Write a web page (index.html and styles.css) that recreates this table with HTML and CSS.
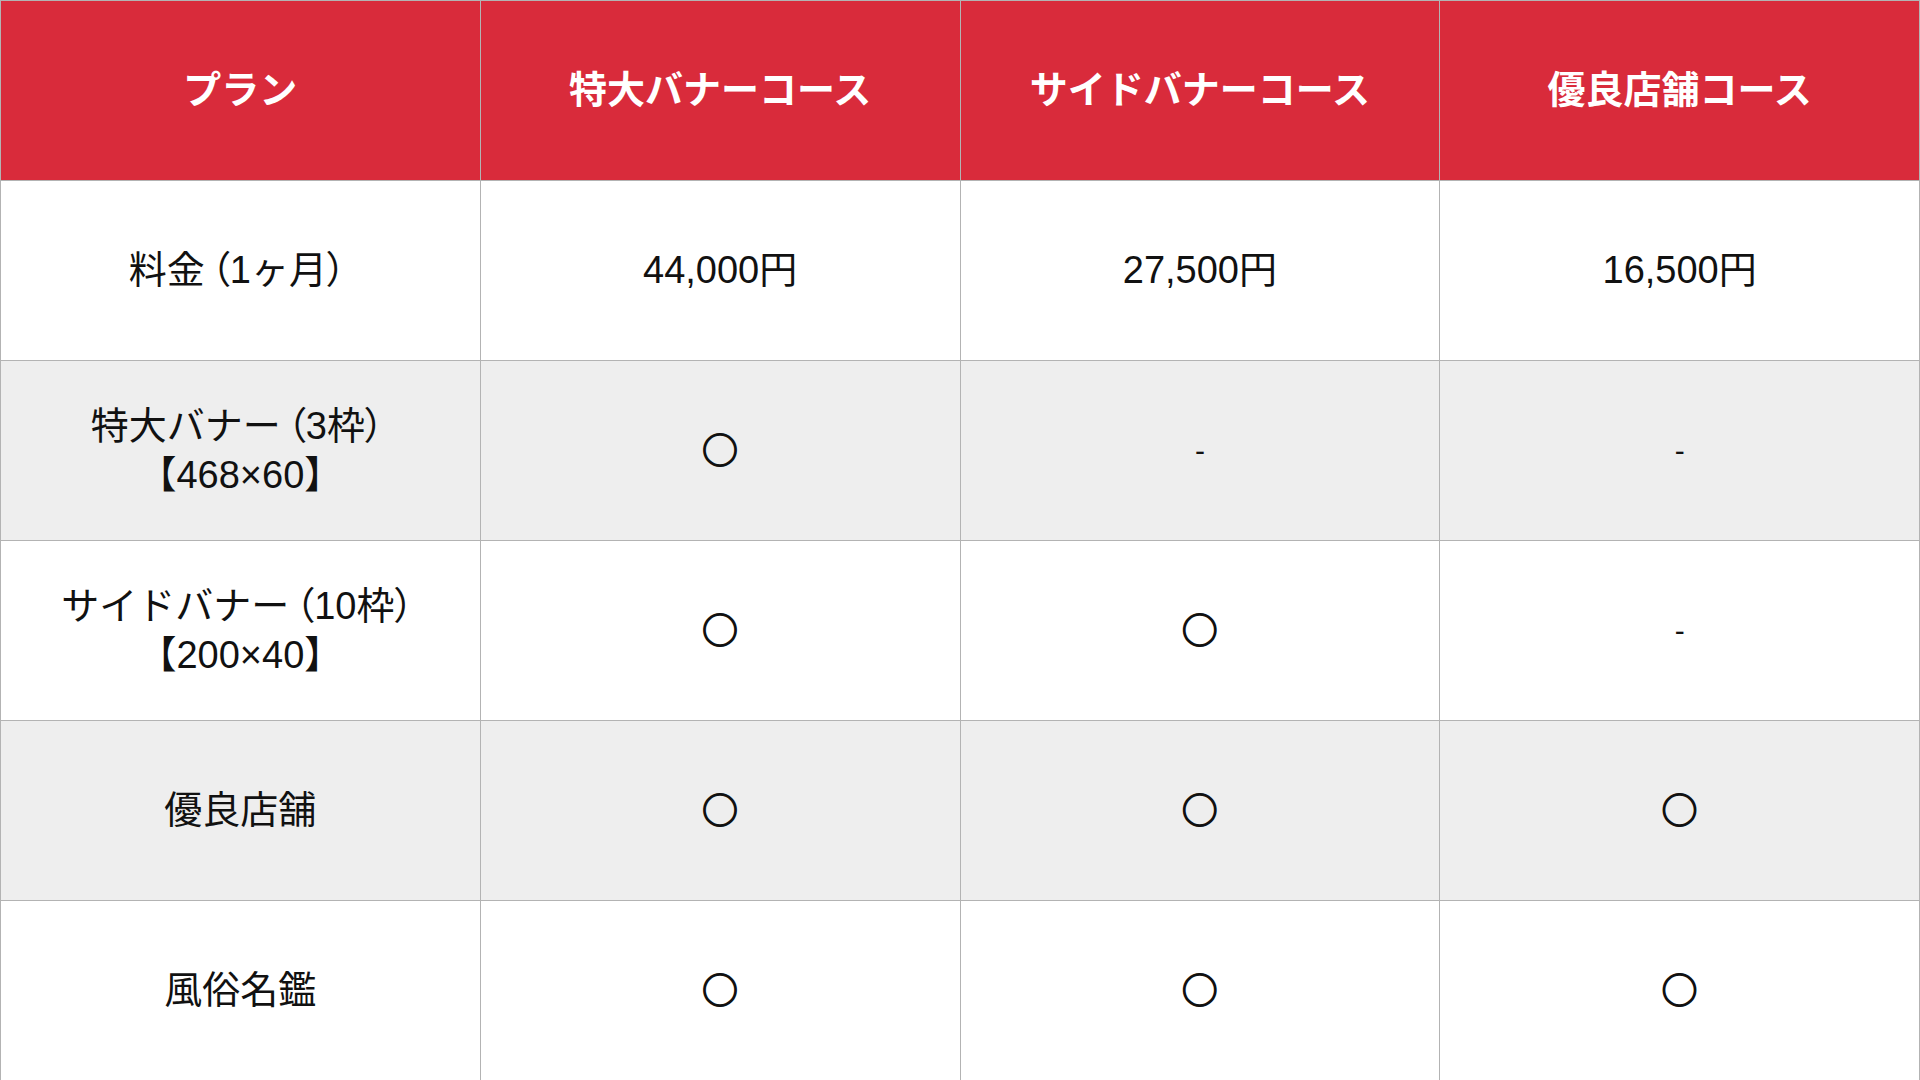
FILE: index.html
```html
<!DOCTYPE html>
<html lang="ja">
<head>
<meta charset="utf-8">
<title>プラン比較</title>
<link rel="stylesheet" href="styles.css">
</head>
<body>
<table class="plans">
  <thead>
    <tr>
      <th>プラン</th>
      <th>特大バナーコース</th>
      <th>サイドバナーコース</th>
      <th>優良店舗コース</th>
    </tr>
  </thead>
  <tbody>
    <tr>
      <td>料金<span class="po">（</span>1ヶ月<span class="pc">）</span></td>
      <td>44,000円</td>
      <td>27,500円</td>
      <td>16,500円</td>
    </tr>
    <tr class="alt">
      <td>特大バナー<span class="po">（</span>3枠<span class="pc">）</span><br>【468×60】</td>
      <td class="mark"><span>○</span></td>
      <td class="dash">-</td>
      <td class="dash">-</td>
    </tr>
    <tr>
      <td>サイドバナー<span class="po">（</span>10枠<span class="pc">）</span><br>【200×40】</td>
      <td class="mark"><span>○</span></td>
      <td class="mark"><span>○</span></td>
      <td class="dash">-</td>
    </tr>
    <tr class="alt">
      <td>優良店舗</td>
      <td class="mark"><span>○</span></td>
      <td class="mark"><span>○</span></td>
      <td class="mark"><span>○</span></td>
    </tr>
    <tr>
      <td>風俗名鑑</td>
      <td class="mark"><span>○</span></td>
      <td class="mark"><span>○</span></td>
      <td class="mark"><span>○</span></td>
    </tr>
  </tbody>
</table>
</body>
</html>
```
FILE: styles.css
```css
html, body {
  margin: 0;
  padding: 0;
  background: #ffffff;
  overflow: hidden;
}
body {
  font-family: "Liberation Sans", "Noto Sans CJK JP", sans-serif;
  color: #111111;
}
.plans {
  width: 1920px;
  border-collapse: collapse;
  table-layout: fixed;
}
.plans th,
.plans td {
  border: 1px solid #b3b3b3;
  height: 179px;
  padding: 0;
  text-align: center;
  vertical-align: middle;
  font-size: 38px;
  line-height: 49px;
}
.plans th {
  background: #d92b3b;
  color: #ffffff;
  font-weight: bold;
}
.plans td {
  font-weight: normal;
}
.plans tr.alt td {
  background: #eeeeee;
}
.po,
.pc {
  font-feature-settings: "palt";
}
.po {
  margin-left: 6px;
}
.pc {
  margin-right: 6px;
}
.plans td.mark {
  font-family: "Noto Sans CJK JP", sans-serif;
  font-size: 36px;
}
.plans td.mark span {
  display: inline-block;
  transform: translateY(-2px);
  -webkit-text-stroke: 1.4px #111111;
}
.plans td.dash {
  font-size: 30px;
}
```
